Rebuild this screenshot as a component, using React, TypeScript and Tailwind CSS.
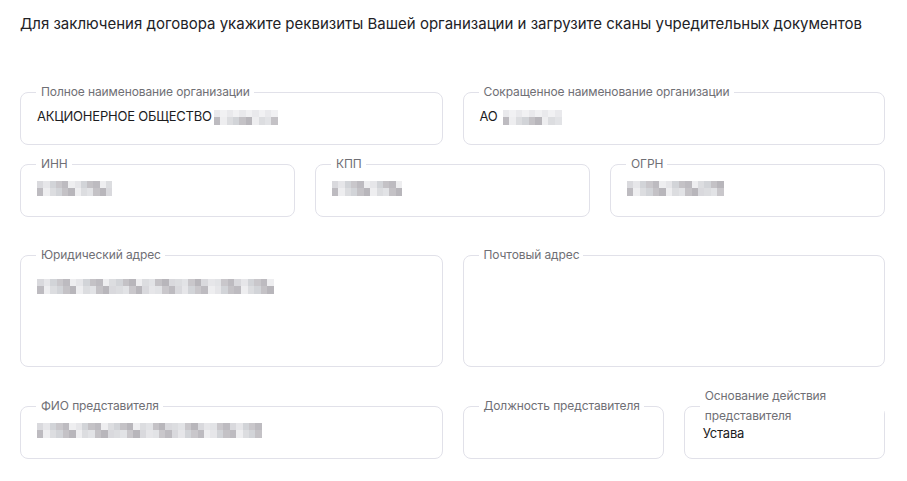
import React from 'react';

// pixel mosaic used in place of hidden values
const shades = ['#d9d9dd', '#c9c7cb', '#e6e6e9', '#bdbbc0', '#d2d4d8', '#eeeef0', '#c4c2c6', '#dcdde0', '#b8b6bb', '#e2e3e6'];

function Mosaic({ width, top = true }: { width: number; top?: boolean }) {
  const cols = Math.round(width / 6.5);
  const rows = [0, 1];
  return (
    <span className="inline-flex flex-col align-middle">
      {rows.map((r) => (
        <span key={r} className="flex">
          {Array.from({ length: cols }).map((_, i) => {
            const idx = (i * 7 + r * 3 + (i % 3) * 5) % shades.length;
            let color = shades[idx];
            if (r === 0 && !top) color = i % 2 ? '#f1f1f3' : '#e9e9ec';
            return <span key={i} className="block h-[7.5px]" style={{ width: width / cols, backgroundColor: color }} />;
          })}
        </span>
      ))}
    </span>
  );
}

function Field({
  label,
  children,
  tall,
  wrapLabel,
}: {
  label: string;
  children?: React.ReactNode;
  tall?: boolean;
  wrapLabel?: boolean;
}) {
  return (
    <fieldset className="min-w-0 rounded-[8px] border border-[#e1e1e9] bg-white">
      <legend className="ml-[15px] pl-[5px] pr-[4px] text-[12px] leading-[20px] tracking-[-0.1px] text-[#6f6f75]">{label}</legend>
      <div
        className={
          tall
            ? 'mt-[11px] h-[20px] pb-[70px] pl-[16px] box-content'
            : wrapLabel
            ? 'mt-[-3px] h-[20px] pb-[15px] pl-[18px] box-content'
            : 'mt-[4px] h-[20px] pb-[18px] pl-[16px] box-content'
        }
      >
        <div className="flex h-[20px] items-center text-[13px] leading-[20px] tracking-[-0.2px] text-[#1c1c1e]">{children}</div>
      </div>
    </fieldset>
  );
}

export default function App() {
  return (
    <div className="min-h-[481px] bg-white pl-5 pr-[22px] pt-[14px]" style={{ fontFamily: 'Inter, "Noto Sans", sans-serif' }}>
      <p className="text-[15px] leading-[20px] text-[#222226]">
        Для заключения договора укажите реквизиты Вашей организации и загрузите сканы учредительных документов
      </p>

      <div className="mt-[48px] grid grid-cols-2 gap-5">
        <Field label="Полное наименование организации">
          <span>АКЦИОНЕРНОЕ ОБЩЕСТВО</span>
          <span className="ml-[2px]">
            <Mosaic width={64} top={false} />
          </span>
        </Field>
        <Field label="Сокращенное наименование организации">
          <span>АО</span>
          <span className="ml-[5px]">
            <Mosaic width={59} top={false} />
          </span>
        </Field>
      </div>

      <div className="mt-[9px] grid grid-cols-3 gap-5">
        <Field label="ИНН">
          <Mosaic width={75} />
        </Field>
        <Field label="КПП">
          <Mosaic width={70} />
        </Field>
        <Field label="ОГРН">
          <Mosaic width={97} />
        </Field>
      </div>

      <div className="mt-[28px] grid grid-cols-2 gap-5">
        <Field label="Юридический адрес" tall>
          <Mosaic width={237} />
        </Field>
        <Field label="Почтовый адрес" tall />
      </div>

      <div className="mt-[19px] grid grid-cols-2 items-end gap-5">
        <Field label="ФИО представителя">
          <Mosaic width={225} />
        </Field>
        <div className="grid grid-cols-2 items-end gap-5">
          <Field label="Должность представителя" />
          <Field label="Основание действия представителя" wrapLabel>
            <span>Устава</span>
          </Field>
        </div>
      </div>
    </div>
  );
}
